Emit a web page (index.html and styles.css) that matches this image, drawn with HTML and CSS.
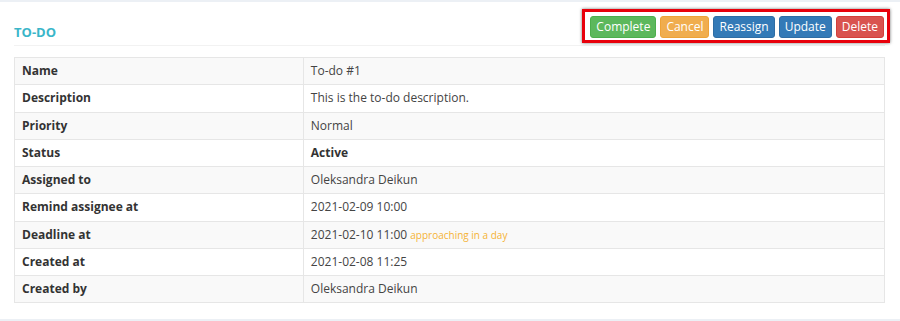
FILE: index.html
```html
<!DOCTYPE html>
<html lang="en">
<head>
  <meta charset="UTF-8" />
  <title>To-do</title>
  <meta name="viewport" content="width=device-width, initial-scale=1.0" />
  <link rel="stylesheet" href="styles.css">
</head>
<body>

<div class="box">
  <div class="box-header">
    <h3 class="box-title">To-do</h3>
    <div class="actions">
      <button class="btn btn-success">Complete</button>
      <button class="btn btn-warning">Cancel</button>
      <button class="btn btn-primary">Reassign</button>
      <button class="btn btn-primary">Update</button>
      <button class="btn btn-danger">Delete</button>
    </div>
  </div>

  <table class="details">
    <tr><th>Name</th><td>To-do #1</td></tr>
    <tr><th>Description</th><td>This is the to-do description.</td></tr>
    <tr><th>Priority</th><td>Normal</td></tr>
    <tr><th>Status</th><td><strong>Active</strong></td></tr>
    <tr><th>Assigned to</th><td>Oleksandra Deikun</td></tr>
    <tr><th>Remind assignee at</th><td>2021-02-09 10:00</td></tr>
    <tr><th>Deadline at</th><td>2021-02-10 11:00 <small class="text-warning">approaching in a day</small></td></tr>
    <tr><th>Created at</th><td>2021-02-08 11:25</td></tr>
    <tr><th>Created by</th><td>Oleksandra Deikun</td></tr>
  </table>
</div>

</body>
</html>
```

FILE: styles.css
```css
* {
  box-sizing: border-box;
}

body {
  margin: 0;
  padding: 2px 0;
  background: #ecf0f5;
  font-family: "Open Sans", "Noto Sans", sans-serif;
  font-size: 12px;
  color: #333;
}

.box {
  background: #fff;
  height: 317px;
  padding: 0 15px 0 14px;
}

.box-header {
  display: flex;
  justify-content: space-between;
  align-items: flex-start;
  padding-top: 7px;
  height: 44px;
  border-bottom: 1px solid #f2f2f2;
}

.box-title {
  margin: 14px 0 0;
  font-size: 13px;
  font-weight: 700;
  text-transform: uppercase;
  color: #3ab6c9;
}

.actions {
  display: flex;
  gap: 4px;
  margin-right: -5px;
  padding: 4px 3px 2px 5px;
  border: 3px solid #e8000b;
  box-shadow: 0 0 3px rgba(0, 0, 0, 0.55);
}

.btn {
  font-family: inherit;
  font-size: 12px;
  line-height: 18px;
  padding: 1px 5px;
  border: 1px solid transparent;
  border-radius: 3px;
  color: #fff;
  cursor: pointer;
}

.btn-success {
  background: #5cb85c;
  border-color: #4cae4c;
}

.btn-warning {
  background: #f0ad4e;
  border-color: #eea236;
}

.btn-primary {
  background: #337ab7;
  border-color: #2e6da4;
}

.btn-danger {
  background: #d9534f;
  border-color: #d43f3a;
}

.details {
  width: 100%;
  margin-top: 11px;
  border-collapse: collapse;
  border: 1px solid #e6e6e6;
}

.details th,
.details td {
  text-align: left;
  padding: 5px 7px;
  line-height: 16.25px;
  border: 1px solid #e6e6e6;
}

.details th {
  width: 33.2%;
  font-weight: 700;
  color: #333;
}

.details td {
  color: #444;
}

.details tr:nth-child(odd) {
  background: #f9f9f9;
}

.details strong {
  color: #333;
}

.text-warning {
  font-size: 10px;
  color: #f5b335;
}
```
